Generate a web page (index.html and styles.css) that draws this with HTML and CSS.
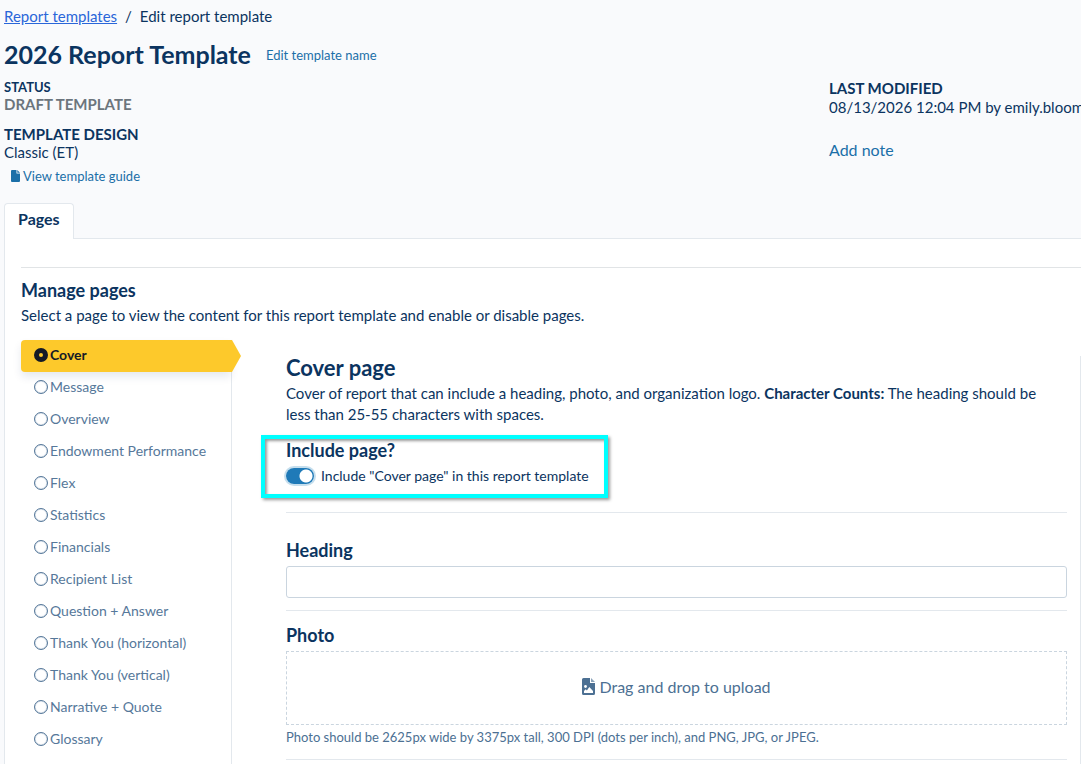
FILE: index.html
```html
<!DOCTYPE html>
<html lang="en">
<head>
<meta charset="utf-8">
<title>Edit report template</title>
<link rel="stylesheet" href="styles.css">
</head>
<body>
<div class="page">
  <header class="header">
    <nav class="breadcrumb" aria-label="Breadcrumb"><a class="crumb-link" href="#">Report templates</a><span class="crumb-sep">/</span><span>Edit report template</span></nav>
    <div class="title-row">
      <h1 class="title">2026 Report Template</h1>
      <a class="link small-link" href="#">Edit template name</a>
    </div>
    <div class="meta">
      <div class="meta-main">
        <div class="meta-label status-label">STATUS</div>
        <div class="status">DRAFT TEMPLATE</div>
        <div class="meta-label design-label">TEMPLATE DESIGN</div>
        <div class="meta-value">Classic (ET)</div>
        <a class="link guide" href="#"><svg class="guide-icon" viewBox="0 0 9 12" aria-hidden="true"><path fill="currentColor" d="M1 0h4.5v3.5H9V11a1 1 0 0 1-1 1H1a1 1 0 0 1-1-1V1a1 1 0 0 1 1-1z"/><path fill="currentColor" d="M6.3 0 9 2.7H6.3z"/></svg>View template guide</a>
      </div>
      <div class="meta-side">
        <div class="meta-label">LAST MODIFIED</div>
        <div class="meta-value modified">08/13/2026 12:04 PM by emily.bloom</div>
        <a class="link note" href="#">Add note</a>
      </div>
    </div>
  </header>

  <div class="tabs" role="tablist"><button class="tab" type="button" role="tab" aria-selected="true">Pages</button></div>

  <main class="panel">
    <div class="intro">
      <h2 class="section-title">Manage pages</h2>
      <p class="text">Select a page to view the content for this report template and enable or disable pages.</p>
    </div>
    <div class="workspace">
      <nav class="side" aria-label="Report pages">
        <a class="side-item active" href="#"><span class="dot"></span>Cover</a>
        <a class="side-item" href="#"><span class="dot"></span>Message</a>
        <a class="side-item" href="#"><span class="dot"></span>Overview</a>
        <a class="side-item" href="#"><span class="dot"></span>Endowment Performance</a>
        <a class="side-item" href="#"><span class="dot"></span>Flex</a>
        <a class="side-item" href="#"><span class="dot"></span>Statistics</a>
        <a class="side-item" href="#"><span class="dot"></span>Financials</a>
        <a class="side-item" href="#"><span class="dot"></span>Recipient List</a>
        <a class="side-item" href="#"><span class="dot"></span>Question + Answer</a>
        <a class="side-item" href="#"><span class="dot"></span>Thank You (horizontal)</a>
        <a class="side-item" href="#"><span class="dot"></span>Thank You (vertical)</a>
        <a class="side-item" href="#"><span class="dot"></span>Narrative + Quote</a>
        <a class="side-item" href="#"><span class="dot"></span>Glossary</a>
      </nav>
      <section class="content">
        <h2 class="content-title">Cover page</h2>
        <p class="text description">Cover of report that can include a heading, photo, and organization logo. <strong>Character Counts:</strong> The heading should be less than 25-55 characters with spaces.</p>
        <div class="include">
          <h3 class="section-title">Include page?</h3>
          <label class="switch-row" for="include"><input class="switch" id="include" type="checkbox" role="switch" checked>Include "Cover page" in this report template</label>
        </div>
        <div class="field">
          <label class="section-title" for="heading">Heading</label>
          <input class="input" id="heading" type="text">
        </div>
        <div class="field">
          <h3 class="section-title">Photo</h3>
          <button class="dropzone" type="button"><svg class="image-icon" viewBox="0 0 13 17" aria-hidden="true"><path fill="currentColor" d="M1.500 0H8v5h5v10.500a1.500 1.500 0 0 1-1.500 1.500h-10A1.500 1.500 0 0 1 0 15.500v-14A1.500 1.500 0 0 1 1.500 0z"/><path fill="currentColor" opacity=".65" d="M9 0l4 4H9z"/><circle cx="3.500" cy="8.500" r="1.400" fill="#fff"/><path fill="#fff" d="M2 15v-2l1.700-1.700 1.200 1.200L7.300 9 11 13v2z"/></svg>Drag and drop to upload</button>
          <p class="help">Photo should be 2625px wide by 3375px tall, 300 DPI (dots per inch), and PNG, JPG, or JPEG.</p>
        </div>
        <hr class="rule">
      </section>
    </div>
  </main>
</div>
</body>
</html>
```
FILE: styles.css
```css
*, *::after { box-sizing: border-box; }

body {
  margin: 0;
  background: #f9fafc;
  color: #0b3460;
  font-family: Lato, "Noto Sans", sans-serif;
  font-size: 15px;
  line-height: 20px;
}

h1, h2, h3, p { margin: 0; }

.page {
  display: flex;
  flex-direction: column;
  min-height: 100vh;
  padding-left: 4px;
  overflow-x: hidden;
}

.header { padding-top: 6px; }
.breadcrumb { display: flex; gap: 8px; }
.crumb-link { color: #2a66d9; }
.link { color: #1b6fa8; text-decoration: none; }

.title-row {
  display: flex;
  align-items: center;
  gap: 15px;
  margin-top: 12px;
}
.title { font-size: 25px; line-height: 32px; font-weight: 700; }
.small-link { padding-top: 2px; font-size: 13px; }

.meta {
  display: grid;
  grid-template-columns: minmax(0, 825fr) minmax(0, 252fr);
  margin-top: 8px;
}
.meta-label { font-weight: 700; line-height: 18px; }
.meta-value { line-height: 18px; }
.status-label { font-size: 13px; }
.status { color: #6c757d; font-weight: 700; line-height: 16px; }
.design-label { margin-top: 13px; }
.guide {
  display: inline-flex;
  align-items: center;
  gap: 3px;
  margin-top: 5px;
  padding-left: 7px;
  font-size: 13px;
}
.guide-icon { width: 9px; height: 12px; }
.meta-side { padding-top: 1px; }
.modified { margin-top: 1px; white-space: nowrap; }
.note { display: inline-block; margin-top: 24px; font-size: 16px; }

.tabs { display: flex; margin-top: 17px; }
.tab {
  position: relative;
  z-index: 1;
  height: 36px;
  margin: 0 0 -1px;
  padding: 0 13px 6px;
  border: 1px solid #e3e8ed;
  border-bottom: 0;
  border-radius: 4px 4px 0 0;
  background: #fff;
  color: inherit;
  font: 700 16px/20px Lato, "Noto Sans", sans-serif;
}

.panel {
  display: flex;
  flex: 1;
  flex-direction: column;
  padding: 28px 0 0 16px;
  border: 1px solid #e3e8ed;
  border-width: 1px 0 0 1px;
  background: #fff;
}
.intro { padding: 10px 0 14px; border-top: 1px solid #e1e4e6; }
.section-title {
  display: block;
  font-size: 18px;
  line-height: 24px;
  font-weight: 700;
}
.text { line-height: 21px; }
.intro .text { margin-top: 3px; }

.workspace { display: flex; flex: 1; gap: 54px; }
.side {
  flex: 0 0 211px;
  border-right: 1px solid #e3e8ed;
}
.side-item {
  display: flex;
  align-items: center;
  gap: 2px;
  height: 32px;
  padding: 0 0 2px 13px;
  color: #56789a;
  font-size: 14px;
  text-decoration: none;
}
.dot {
  width: 14px;
  height: 14px;
  border: 1px solid #56789a;
  border-radius: 50%;
  box-shadow: inset 0 0 1px #56789a;
}
.active {
  position: relative;
  border-radius: 4px 0 0 4px;
  background: #fdc92b;
  box-shadow: 0 5px 8px #0b34601a;
  color: #141a26;
  font-weight: 700;
}
.active::after {
  content: "";
  position: absolute;
  top: 0;
  left: 100%;
  width: 10px;
  height: 100%;
  background: #fdc92b;
  clip-path: polygon(0 0, 10% 0, 100% 50%, 10% 100%, 0 100%);
}
.active .dot { border: 5px solid #141a26; box-shadow: none; }

.content {
  flex: 1;
  min-width: 0;
  margin-top: 16px;
  padding-right: 13px;
  border-right: 1px solid #e3e8ed;
}
.content-title { margin-bottom: 3px; font-size: 22px; line-height: 24px; }
.description { padding-right: 12px; }

.include { position: relative; padding: 13px 0 26px; }
.include::after {
  content: "";
  position: absolute;
  top: 10px;
  left: -25px;
  width: 347px;
  height: 63px;
  border: 4px solid #0ff;
  box-shadow: 2px 2px 3px #0006, inset 2px 2px 3px #0006;
  pointer-events: none;
}
.switch-row {
  display: flex;
  align-items: center;
  gap: 7px;
  margin-top: 4px;
  font-size: 14px;
}
.switch {
  appearance: none;
  width: 28px;
  height: 16px;
  margin: 0;
  border-radius: 8px;
  background: radial-gradient(circle at 20px 8px, #fff 6px, #1f7ab8 7px);
  box-shadow: 0 0 0 2px #c5deed;
}

.field { padding: 12px 0; border-top: 1px solid #e3e8ed; }
.include + .field { padding-top: 25px; }
.input {
  display: block;
  width: 100%;
  height: 32px;
  margin-top: 4px;
  padding: 4px 8px;
  border: 1px solid #cad5df;
  border-radius: 3px;
  background: #fff;
  font: inherit;
}
.dropzone {
  display: flex;
  align-items: center;
  justify-content: center;
  gap: 4px;
  width: 100%;
  height: 74px;
  margin-top: 4px;
  padding: 0 0 3px;
  border: 1px dashed #cad5df;
  background: #fff;
  color: #4c7093;
  font: 16px/20px Lato, "Noto Sans", sans-serif;
}
.image-icon { width: 13px; height: 17px; }
.help { margin-top: 2px; color: #4c7093; font-size: 13px; }
.rule { margin: 0; border: 0; border-top: 1px solid #e3e8ed; }
```
